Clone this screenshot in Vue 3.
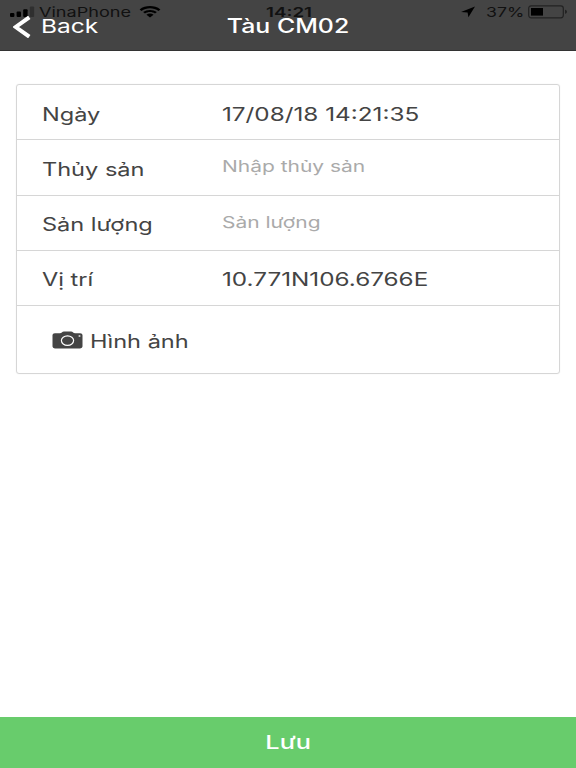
<template>
    <div class="screen">
        <header class="navBar">
            <div class="statusBar">
                <svg class="signal" viewBox="0 0 25 12">
                    <rect x="0" y="7" width="4.4" height="4" rx="1" />
                    <rect x="6.6" y="5.6" width="4.4" height="5.4" rx="1" />
                    <rect x="13.2" y="3.2" width="4.4" height="7.8" rx="1" />
                    <rect x="19.8" y="0.5" width="4.4" height="10.5" rx="1" opacity="0.3" />
                </svg>
                <span class="carrier">VinaPhone</span>
                <svg class="wifi" viewBox="0 0 22 12">
                    <path d="M0.6 3.4C6.5 -1 15.5 -1 21.4 3.4L19.5 4.9C14.5 1.4 7.5 1.4 2.5 4.9Z" />
                    <path d="M4.1 6.1C8 3.2 14 3.2 17.9 6.1L16 7.6C13 5.6 9 5.6 6 7.6Z" />
                    <path d="M7.4 8.7C9.5 7.2 12.5 7.2 14.6 8.7L11 11.5Z" />
                </svg>
                <span class="clock">14:21</span>
                <svg class="location" viewBox="0 0 14 12">
                    <path d="M14 0.6L7.4 11.2L6.6 6.4L0 6Z" />
                </svg>
                <span class="percent">37%</span>
                <svg class="battery" viewBox="0 0 40 14">
                    <rect x="0.7" y="0.8" width="34.6" height="12" rx="2.5" fill="none" stroke="#222" stroke-width="1.2" />
                    <rect x="3" y="3" width="12" height="7.6" fill="#000" />
                    <path d="M37 4.8C39.6 5.2 39.6 8.4 37 8.8Z" fill="#222" />
                </svg>
            </div>
            <button class="backButton">
                <svg class="chevron" viewBox="0 0 18 22">
                    <path d="M16.3 1.3L2.8 11L16.3 20.7" />
                </svg>
                <span class="backText">Back</span>
            </button>
            <h1 class="title">Tàu CM02</h1>
        </header>

        <main class="content">
            <div class="card">
                <div class="row" v-for="field in fields" :key="field.id">
                    <label class="label" :for="field.id"><span>{{ field.label }}</span></label>
                    <input
                        v-if="field.placeholder"
                        class="input"
                        type="text"
                        :id="field.id"
                        :placeholder="field.placeholder"
                        v-model="form[field.id]"
                    />
                    <span v-else class="value">{{ form[field.id] }}</span>
                </div>
                <div class="row photoRow">
                    <svg class="camera" viewBox="0 0 30 18">
                        <path d="M2.4 2.2H7.4C9.2 2.2 9.5 0.4 11.5 0.4H18.5C20.5 0.4 20.8 2.2 22.6 2.2H27.6Q30 2.2 30 4V15.6Q30 17.4 27.6 17.4H2.4Q0 17.4 0 15.6V4Q0 2.2 2.4 2.2Z" fill="#444" />
                        <ellipse cx="15" cy="9.6" rx="6.1" ry="4.8" fill="none" stroke="#fff" stroke-width="1.2" />
                        <ellipse cx="27" cy="5" rx="1.1" ry="0.8" fill="#fff" />
                    </svg>
                    <span class="photoText">Hình ảnh</span>
                </div>
            </div>
        </main>

        <button class="saveButton"><span class="saveText">Lưu</span></button>
    </div>
</template>

<script setup>
import { reactive } from "vue";

const form = reactive({
    date: "17/08/18 14:21:35",
    species: "",
    amount: "",
    position: "10.771N106.6766E"
});

const fields = [
    { id: "date", label: "Ngày" },
    { id: "species", label: "Thủy sản", placeholder: "Nhập thủy sản" },
    { id: "amount", label: "Sản lượng", placeholder: "Sản lượng" },
    { id: "position", label: "Vị trí" }
];
</script>

<style>
body
{
    margin: 0;
    background-color: #fff;
}
</style>

<style scoped>
.screen
{
    display: flex;
    flex-direction: column;
    height: 768px;
    overflow: hidden;
    font-family: Inter, "Noto Sans", sans-serif;
    color: #444;
    background-color: #fff;
}

button
{
    border: none;
    padding: 0;
    background: none;
    font-family: inherit;
    color: #fff;
}

.navBar
{
    position: relative;
    box-sizing: border-box;
    flex: none;
    display: grid;
    grid-template-columns: 1fr auto 1fr;
    height: 51px;
    background-color: #444;
    border-bottom: 1px solid #333;
}

/* the system status bar lies over the navigation bar */
.statusBar
{
    position: absolute;
    top: 5px;
    left: 10px;
    right: 8px;
    height: 14px;
    display: flex;
    align-items: center;
    font-size: 13.6px;
    line-height: 14px;
    color: #111;
    white-space: nowrap;
}

.signal
{
    width: 25px;
    height: 12px;
}

.carrier
{
    width: 91px;
    margin-left: 4px;
    transform: scaleX(1.33);
    transform-origin: left;
}

.wifi
{
    width: 22px;
    height: 12px;
    margin-left: 9px;
}

.clock
{
    width: 50px;
    margin-left: 105px;
    font-weight: 600;
    transform: scaleX(1.38);
    transform-origin: left;
}

.location
{
    width: 14px;
    height: 12px;
    margin-left: 145px;
}

.percent
{
    width: 37px;
    margin-left: 11px;
    transform: scaleX(1.3);
    transform-origin: left;
}

.battery
{
    width: 40px;
    height: 14px;
    margin-left: 5px;
}

.backButton
{
    position: relative;
    display: flex;
    align-items: center;
    height: 51px;
    padding: 2px 0 0 13px;
}

.chevron
{
    width: 18px;
    height: 22px;
    fill: none;
    stroke: #fff;
    stroke-width: 4;
}

.backText
{
    margin-left: 10px;
    font-size: 19px;
    transform: scaleX(1.29);
    transform-origin: left;
}

.title
{
    position: relative;
    margin: 0;
    font-size: 19.5px;
    font-weight: 500;
    line-height: 53px;
    color: #fff;
    transform: scaleX(1.275);
}

.content
{
    flex: 1;
    padding: 33px 16px 0 16px;
}

.card
{
    border: 1px solid #d6d6d6;
    border-radius: 3px;
    box-shadow: 0 0 1px #ddd;
}

.row
{
    box-sizing: border-box;
    display: flex;
    align-items: center;
    height: 55.25px;
    padding: 3px 26px 0 25px;
    border-bottom: 1px solid #d6d6d6;
    font-size: 18.4px;
    line-height: 24px;
    white-space: nowrap;
}

.label
{
    flex: none;
    width: 180px;
}

.label span, .photoText
{
    display: inline-block;
    transform: scaleX(1.28);
    transform-origin: left;
}

.value
{
    transform: scaleX(1.32);
    transform-origin: left;
}

.input
{
    width: 200px;
    height: 30px;
    margin: 0 0 5px 0;
    padding: 0;
    border: none;
    outline: none;
    background: none;
    font-family: inherit;
    font-size: 16px;
    color: #444;
    transform: scaleX(1.31);
    transform-origin: left;
}

.input::placeholder
{
    color: #aaa;
    opacity: 1;
}

.photoRow
{
    height: 67px;
    padding: 2px 0 0 35px;
    border-bottom: none;
}

.camera
{
    width: 31px;
    height: 18px;
    margin-bottom: 2px;
}

.photoText
{
    margin-left: 7px;
}

.saveButton
{
    flex: none;
    height: 51px;
    background-color: #68cc6c;
}

.saveText
{
    display: inline-block;
    font-size: 19px;
    font-weight: 500;
    transform: scaleX(1.33);
}
</style>
